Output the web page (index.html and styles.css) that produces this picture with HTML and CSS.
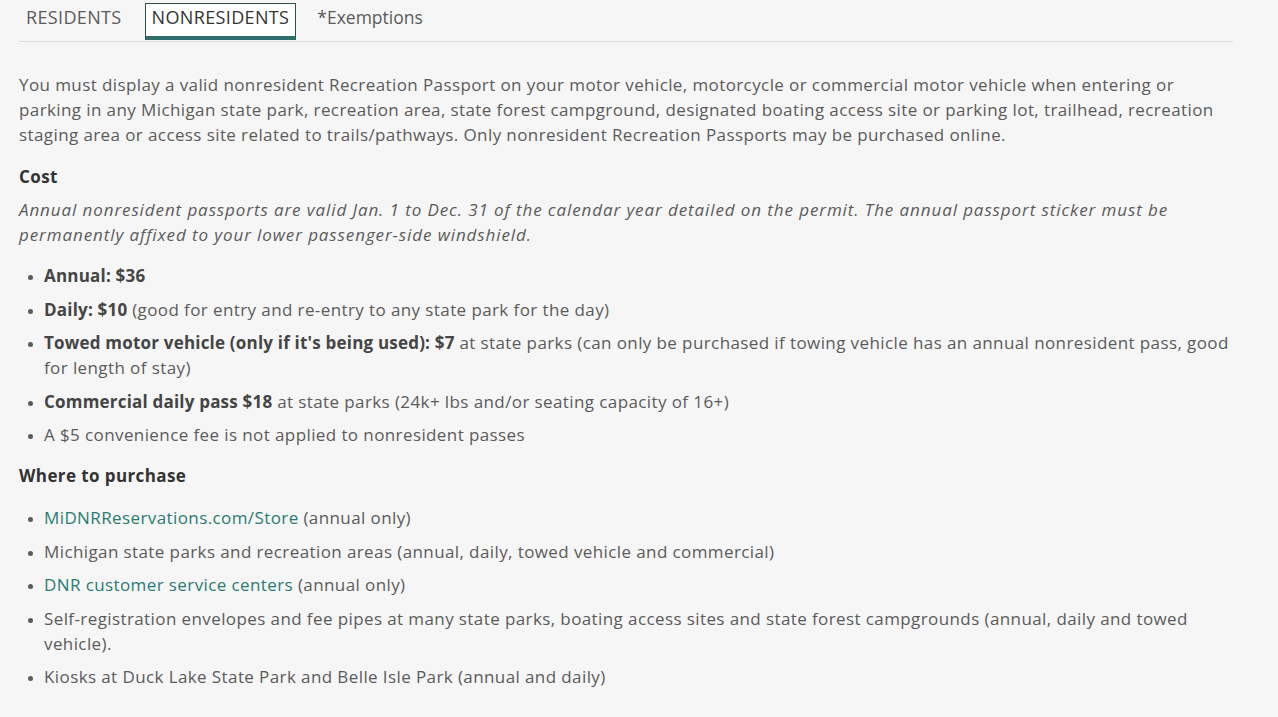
FILE: index.html
```html
<!DOCTYPE html>
<html lang="en">
<head>
  <meta charset="UTF-8" />
  <meta name="viewport" content="width=device-width, initial-scale=1.0"/>
  <title>Recreation Passport - Nonresidents</title>
  <link rel="stylesheet" href="styles.css">
</head>
<body>

  <div class="page">
    <div class="tabs">
      <a href="#" class="tab">RESIDENTS</a>
      <a href="#" class="tab active">NONRESIDENTS</a>
      <a href="#" class="tab small">*Exemptions</a>
    </div>

    <div class="panel">
      <p class="intro">You must display a valid nonresident Recreation Passport on your motor vehicle, motorcycle or commercial motor vehicle when entering or parking in any Michigan state park, recreation area, state forest campground, designated boating access site or parking lot, trailhead, recreation staging area or access site related to trails/pathways. Only nonresident Recreation Passports may be purchased online.</p>

      <h3>Cost</h3>
      <p class="note">Annual nonresident passports are valid Jan. 1 to Dec. 31 of the calendar year detailed on the permit. The annual passport sticker must be permanently affixed to your lower passenger-side windshield.</p>

      <ul class="list">
        <li><strong>Annual: $36</strong></li>
        <li><strong>Daily: $10</strong> (good for entry and re-entry to any state park for the day)</li>
        <li><strong>Towed motor vehicle (only if it's being used): $7</strong> at state parks (can only be purchased if towing vehicle has an annual nonresident pass, good for length of stay)</li>
        <li><strong>Commercial daily pass $18</strong> at state parks (24k+ lbs and/or seating capacity of 16+)</li>
        <li>A $5 convenience fee is not applied to nonresident passes</li>
      </ul>

      <h3 class="where">Where to purchase</h3>
      <ul class="list">
        <li><a href="#">MiDNRReservations.com/Store</a> (annual only)</li>
        <li>Michigan state parks and recreation areas (annual, daily, towed vehicle and commercial)</li>
        <li><a href="#">DNR customer service centers</a> (annual only)</li>
        <li>Self-registration envelopes and fee pipes at many state parks, boating access sites and state forest campgrounds (annual, daily and towed vehicle).</li>
        <li>Kiosks at Duck Lake State Park and Belle Isle Park (annual and daily)</li>
      </ul>
    </div>
  </div>

</body>
</html>
```

FILE: styles.css
```css
body {
  margin: 0;
  font-family: 'Open Sans', sans-serif;
  background-color: #f6f6f6;
  color: #5b5b5b;
}

.page {
  width: 1214px;
  padding: 0 19px;
}

.tabs {
  display: flex;
  align-items: flex-start;
  padding-top: 3px;
  border-bottom: 1px solid #dcdcdc;
  margin-bottom: 30px;
}

.tab {
  display: block;
  color: #5b5b5b;
  text-decoration: none;
  font-size: 18px;
  letter-spacing: 0.35px;
  line-height: 26px;
  padding: 0 6px 11px;
  border: 1px solid transparent;
  border-bottom: none;
  margin-right: 16px;
}

.tab.active {
  background-color: white;
  color: #333;
  border-color: #2f4f4f;
  border-bottom: 4px solid #2e6f6c;
  padding-bottom: 6px;
  margin-right: 14px;
}

.tab.small {
  font-size: 17.5px;
  letter-spacing: 0;
}

.panel {
  font-size: 17px;
  line-height: 25px;
  letter-spacing: 0.4px;
}

.panel p {
  margin: 0;
}

.intro {
  margin-bottom: 17px !important;
}

.panel h3 {
  margin: 0 0 8px;
  font-size: 17px;
  line-height: 25px;
  font-weight: bold;
  color: #333;
}

.note {
  font-style: italic;
  letter-spacing: 0.9px;
  margin-bottom: 16px !important;
}

.list {
  margin: 0 0 16px;
  padding-left: 25px;
}

.list li {
  margin-bottom: 8.5px;
}

.list li::marker {
  font-size: 13px;
}

.list strong {
  color: #454545;
  letter-spacing: 0.2px;
}

.where {
  margin-bottom: 17px !important;
}

.list a {
  color: #2a7b72;
  text-decoration: none;
}
```
